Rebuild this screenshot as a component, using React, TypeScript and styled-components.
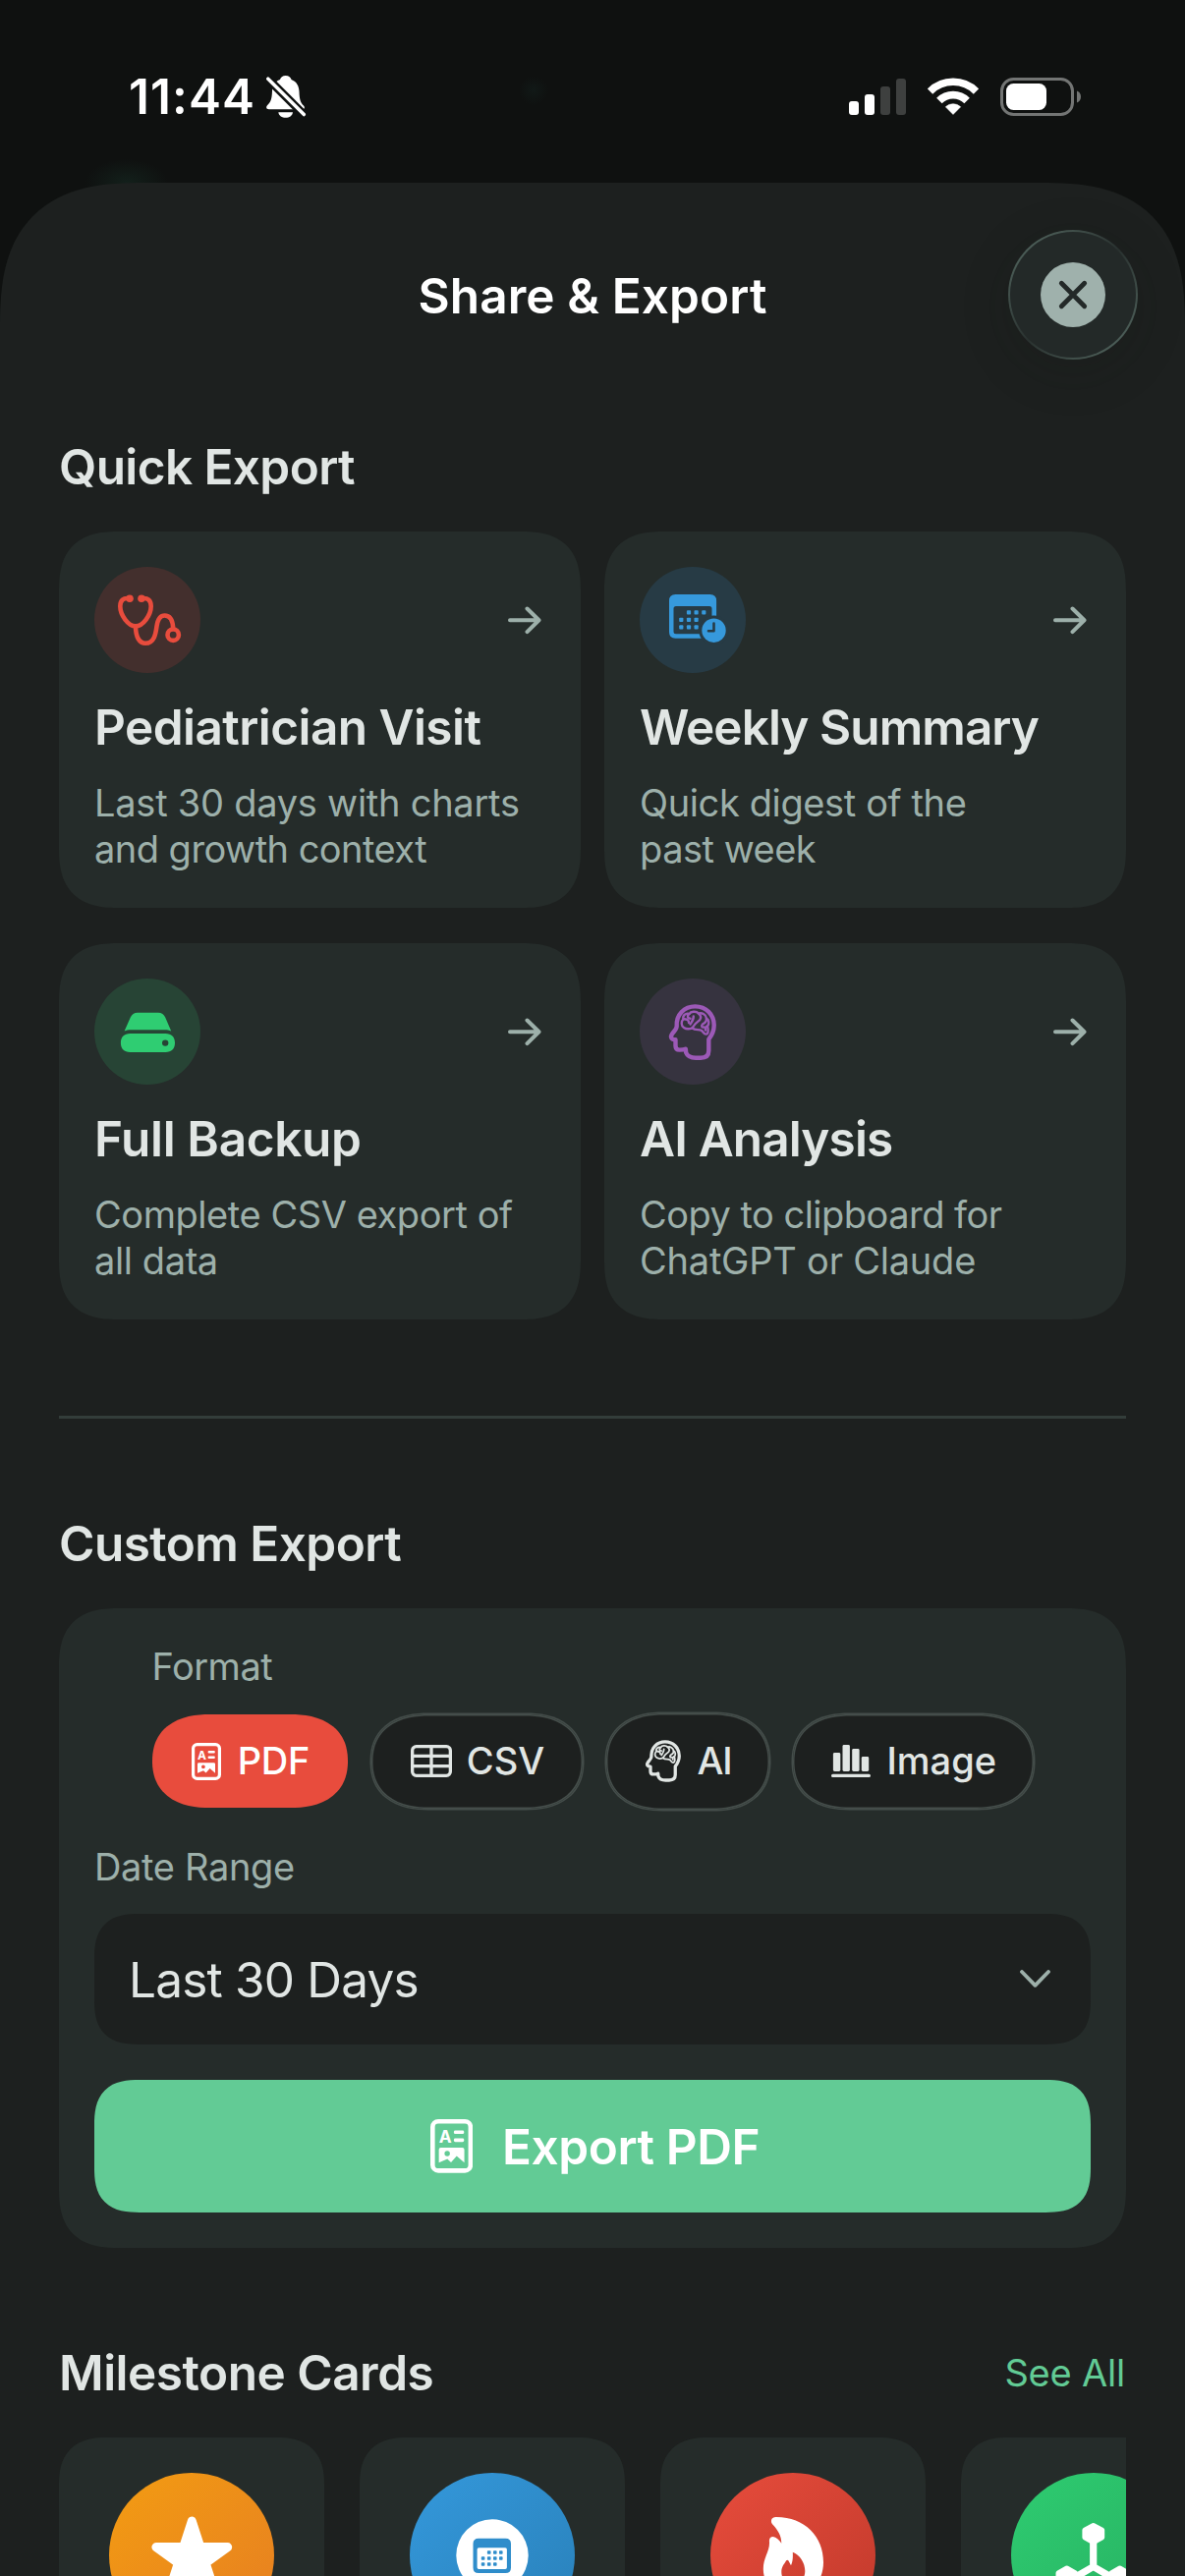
import React from "react";
import styled, { createGlobalStyle } from "styled-components";

const color = {
  backdrop: "#0f1110",
  sheet: "#1d201f",
  card: "#252c2a",
  text: "#e1e6e4",
  muted: "#9db0aa",
  line: "#333d3a",
  outline: "#444d4a",
  green: "#62cb95",
  red: "#e84c3d",
};

const GlobalStyle = createGlobalStyle`
  * { box-sizing: border-box; }
  body { margin: 0; background: ${color.backdrop}; }
  svg { display: block; flex: none; }
`;

const Screen = styled.div`
  width: 1206px;
  height: 2622px;
  overflow: hidden;
  display: flex;
  flex-direction: column;
  font-family: Inter, "Liberation Sans", sans-serif;
  color: ${color.text};
  background:
    radial-gradient(ellipse 42px 24px at 129px 186px, #13201b 0%, #12191600 100%),
    radial-gradient(circle 15px at 543px 92px, #111917 0%, #10151300 100%),
    ${color.backdrop};
`;

const StatusBar = styled.div`
  height: 186px;
  flex: none;
  padding: 68px 106px 58px 131px;
  display: flex;
  align-items: center;
  justify-content: space-between;
`;

const StatusGroup = styled.div<{ $gap: number }>`
  display: flex;
  align-items: center;
  gap: ${(p) => p.$gap}px;
`;

const Clock = styled.span`
  font-size: 49.5px;
  line-height: 60px;
  font-weight: 590;
  letter-spacing: 1.1px;
  color: #fff;
`;

const Sheet = styled.main`
  flex: 1;
  min-height: 0;
  overflow: hidden;
  background: ${color.sheet};
  border-radius: 146px 146px 0 0;
  corner-shape: superellipse(1.4);
  padding-top: 48px;
`;

const SheetHeader = styled.header`
  height: 132px;
  padding: 0 48px;
  display: grid;
  grid-template-columns: 1fr auto 1fr;
  align-items: center;
`;

const SheetTitle = styled.h1`
  grid-column: 2;
  margin: 0;
  padding-top: 2px;
  font-size: 49.5px;
  line-height: 60px;
  font-weight: 590;
  letter-spacing: 0.1px;
  color: #fff;
`;

const CloseButton = styled.button`
  justify-self: end;
  width: 132px;
  height: 132px;
  padding: 0;
  border: 2.5px solid transparent;
  border-radius: 50%;
  display: flex;
  align-items: center;
  justify-content: center;
  background:
    linear-gradient(#232928, #232928) padding-box,
    linear-gradient(135deg, #4d5f59 12%, #29312f 50%, #4d5f59 88%) border-box;
  box-shadow: 0 12px 50px rgba(20, 24, 22, 0.2);
`;

const Content = styled.div`
  padding: 79px 60px 0;
`;

const SectionHead = styled.div`
  display: flex;
  align-items: center;
  justify-content: space-between;
  margin-bottom: 36px;
`;

const SectionTitle = styled.h2<{ $track: number }>`
  margin: 0;
  font-size: 49.5px;
  line-height: 60px;
  font-weight: 590;
  letter-spacing: ${(p) => p.$track}px;
`;

const SeeAll = styled.a`
  padding-right: 1px;
  font-size: 38px;
  line-height: 47px;
  letter-spacing: -0.2px;
  color: ${color.green};
`;

const CardGrid = styled.div`
  display: grid;
  grid-template-columns: 1fr 1fr;
  gap: 36px 24px;
`;

const Card = styled.article`
  height: 383px;
  padding: 36px;
  background: ${color.card};
  border-radius: 62px;
  corner-shape: superellipse(1.4);
`;

const CardTop = styled.div`
  display: flex;
  align-items: center;
  justify-content: space-between;
  padding-right: 4px;
`;

const Badge = styled.div<{ $tint: string; $ink: string }>`
  width: 108px;
  height: 108px;
  border-radius: 50%;
  background: ${(p) => p.$tint};
  color: ${(p) => p.$ink};
`;

const CardTitle = styled.h3<{ $track: number }>`
  margin: 25px 0 24px;
  font-size: 49.5px;
  line-height: 60px;
  font-weight: 590;
  letter-spacing: ${(p) => p.$track}px;
  white-space: nowrap;
`;

const CardText = styled.p`
  margin: 0;
  font-size: 38px;
  line-height: 47px;
  color: ${color.muted};
`;

const CardLine = styled.span<{ $track: number }>`
  display: block;
  white-space: nowrap;
  letter-spacing: ${(p) => p.$track}px;
`;

const Divider = styled.hr`
  height: 3px;
  border: 0;
  margin: 98px 0 97px;
  background: ${color.line};
`;

const Panel = styled.section`
  padding: 36px;
  margin-bottom: 97px;
  background: ${color.card};
  border-radius: 62px;
  corner-shape: superellipse(1.4);
`;

const FormatGroup = styled.div`
  width: 897px;
  margin: 0 auto 35.5px;
`;

const FieldLabel = styled.div<{ $track: number; $after: number }>`
  font-size: 38px;
  line-height: 47px;
  letter-spacing: ${(p) => p.$track}px;
  color: ${color.muted};
  margin-bottom: ${(p) => p.$after}px;
`;

const PillRow = styled.div`
  height: 98px;
  display: flex;
  align-items: center;
  gap: 24px;
`;

const Pill = styled.button<{ $w: number; $h: number; $gap: number; $active?: boolean; $track: number }>`
  width: ${(p) => p.$w}px;
  height: ${(p) => p.$h}px;
  padding: 0 0 0 2px;
  border: 0;
  display: flex;
  align-items: center;
  justify-content: center;
  gap: ${(p) => p.$gap}px;
  border-radius: 58px / ${(p) => p.$h / 2}px;
  corner-shape: superellipse(1.2);
  font: 500 38px/47px Inter, "Liberation Sans", sans-serif;
  letter-spacing: ${(p) => p.$track}px;
  color: ${(p) => (p.$active ? "#fff" : color.text)};
  background: ${(p) => (p.$active ? color.red : color.sheet)};
  box-shadow: ${(p) =>
    p.$active ? "none" : `0 0 0 1.5px ${color.outline}, inset 0 0 0 1.5px ${color.outline}`};
`;

const Select = styled.div`
  height: 133px;
  padding: 0 41px 0 35px;
  margin-bottom: 36px;
  display: flex;
  align-items: center;
  justify-content: space-between;
  border-radius: 46px;
  corner-shape: superellipse(1.4);
  background: ${color.sheet};
  font-size: 49.5px;
  line-height: 60px;
  letter-spacing: -0.8px;
`;

const ExportButton = styled.button`
  width: 100%;
  height: 135px;
  padding: 0 0 0 5px;
  border: 0;
  display: flex;
  align-items: center;
  justify-content: center;
  gap: 30px;
  border-radius: 46px;
  corner-shape: superellipse(1.4);
  background: ${color.green};
  color: #fff;
  font: 590 49.5px/60px Inter, "Liberation Sans", sans-serif;
  letter-spacing: -0.42px;
`;

const MilestoneStrip = styled.div`
  display: flex;
  gap: 36px;
  overflow: hidden;
`;

const MilestoneCard = styled.div`
  flex: none;
  width: 270px;
  height: 330px;
  padding: 36px 51px;
  background: ${color.card};
  border-radius: 48px;
  corner-shape: superellipse(1.3);
`;

const Medal = styled.div<{ $from: string; $to: string }>`
  width: 168px;
  height: 168px;
  border-radius: 50%;
  background: linear-gradient(135deg, ${(p) => p.$from}, ${(p) => p.$to});
  color: #fff;
`;

/* ---------- icons ---------- */

const BellSlash = () => (
  <svg width="41" height="43" viewBox="0 0 41 43">
    <path
      fill="#fff"
      d="M19.7 0C23 0 25 2 25.5 4C31 6 33.4 11 33.5 16.3C33.8 25 35 27.5 38 30.6C39.6 32.4 39 34.2 36.5 34.2H2.8C0 34.2-.6 32 1 30.2C4.500 26.500 5.600 25 6 15.500C6.200 10 9 6 14 4C14.500 2 16.500 0 19.700 0Z"
    />
    <path fill="#fff" d="M12.300 37.300H27C26.500 41 23.500 42.800 19.700 42.800C16 42.800 12.800 41 12.300 37.300Z" />
    <path d="M1.600 3L38.500 40" stroke={color.backdrop} strokeWidth="8.500" />
    <path d="M1.800 3.200L38.300 39.600" stroke="#fff" strokeWidth="3.500" strokeLinecap="round" />
  </svg>
);

const Signal = () => (
  <svg width="58" height="37" viewBox="0 0 58 37">
    <g fill="#fff">
      <rect x="0" y="23" width="10" height="14" rx="3" />
      <rect x="16" y="16" width="10" height="21" rx="3" />
    </g>
    <g fill="#3e403f">
      <rect x="32" y="8" width="10" height="29" rx="3" />
      <rect x="48" y="0" width="10" height="37" rx="3" />
    </g>
  </svg>
);

const Wifi = () => (
  <svg width="52" height="38" viewBox="0 0 52 38">
    <g fill="none" stroke="#fff">
      <path d="M2.500 14A33.200 33.200 0 0 1 49.500 14" strokeWidth="7.600" />
      <path d="M11.900 23.400A20 20 0 0 1 40.100 23.400" strokeWidth="7.800" />
    </g>
    <path d="M26 37.500L18.300 29.800A11 11 0 0 1 33.700 29.800Z" fill="#fff" stroke="#fff" strokeWidth="0.500" />
  </svg>
);

const Battery = () => (
  <svg width="82" height="39" viewBox="0 0 82 39">
    <rect x="1.500" y="1.500" width="72" height="36" rx="12" fill="none" stroke="#737574" strokeWidth="3" />
    <rect x="6" y="6" width="41" height="27" rx="7.500" fill="#fff" />
    <path d="M78 13.500C80.600 14.500 82 16.800 82 19.500C82 22.200 80.600 24.500 78 25.500Z" fill="#737574" />
  </svg>
);

const CloseMark = () => (
  <svg width="66" height="66" viewBox="0 0 66 66">
    <circle cx="33" cy="33" r="33" fill="#9fb1ac" />
    <path d="M21.300 21.300L44.700 44.700M44.700 21.300L21.300 44.700" stroke="#232928" strokeWidth="4.800" strokeLinecap="round" />
  </svg>
);

const Arrow = () => (
  <svg width="34" height="30" viewBox="0 0 34 30" fill="none" stroke={color.muted} strokeWidth="4" strokeLinecap="round" strokeLinejoin="round">
    <path d="M2 15.300H31M19.500 3.500L31.500 15.300L19.500 27.100" />
  </svg>
);

const Chevron = () => (
  <svg width="31" height="19" viewBox="0 0 31 19" fill="none" stroke={color.muted} strokeWidth="3.800" strokeLinecap="round" strokeLinejoin="round">
    <path d="M2 2L15.500 15.800L29 2" />
  </svg>
);

const Stethoscope = () => (
  <svg width="108" height="108" viewBox="0 0 108 108" fill="none" stroke="currentColor" strokeWidth="4.600" strokeLinecap="round">
    <path d="M36 32.300C29.500 30.800 26.300 34.500 26.300 40C26.300 49 34.500 60.300 42 60.300C49.500 60.300 57.700 49 57.700 40C57.700 34.500 54.500 30.800 48 32.300" />
    <path d="M42 60.300C42 71.500 46 77.800 52 77.800C61 77.800 62.500 68 63.500 60.500C64.600 53 67 49.500 71.600 49.500C77 49.500 79.700 54 80.200 62" />
    <circle cx="80.200" cy="69.200" r="5.700" />
    <g fill="currentColor" stroke="none">
      <circle cx="36" cy="32.300" r="3.800" />
      <circle cx="48" cy="32.300" r="3.800" />
    </g>
  </svg>
);

const CalendarClock = ({ gap }: { gap: string }) => (
  <svg width="108" height="108" viewBox="0 0 108 108" fill="currentColor">
    <path
      fillRule="evenodd"
      d="M36.500 28H71.600Q78.100 28 78.100 34.500V66.200Q78.100 72.700 71.600 72.700H36.500Q30 72.700 30 66.200V34.500Q30 28 36.500 28ZM37 40Q34.500 40 34.500 42.500V65.700Q34.500 68.200 37 68.200H71Q73.500 68.200 73.500 65.700V42.500Q73.500 40 71 40Z"
    />
    {[
      [50, 46.3], [57.6, 46.3], [65.3, 46.3],
      [42.3, 53.8], [50, 53.8], [57.6, 53.8],
      [42.3, 61.4], [50, 61.4], [57.6, 61.4],
    ].map(([x, y]) => (
      <rect key={`${x}-${y}`} x={x - 2.1} y={y - 2.1} width="4.200" height="4.200" rx="0.900" />
    ))}
    <circle cx="75.500" cy="64.700" r="15.200" fill={gap} />
    <circle cx="75.500" cy="64.700" r="12.200" />
    <path d="M75.500 57.500V65.200H70" fill="none" stroke={gap} strokeWidth="2.600" strokeLinecap="round" strokeLinejoin="round" />
  </svg>
);

const Drive = () => (
  <svg width="108" height="108" viewBox="0 0 108 108" fill="currentColor">
    <path d="M30.600 53.600L36.800 39.600C38.300 36.200 40.500 34.700 44 34.700H65C68.500 34.700 70.800 36.200 72.200 39.600L78.200 53.600C76 52.500 74 52.200 72 52.200H37C34.500 52.200 32.500 52.500 30.600 53.600Z" />
    <path
      fillRule="evenodd"
      d="M36.400 56H72.500C78.500 56 82 59.500 82 65.500C82 71.500 78.500 75 72.500 75H36.400C30.400 75 26.900 71.500 26.900 65.500C26.900 59.500 30.400 56 36.400 56ZM72.200 62.400A3.200 3.200 0 1 0 72.200 68.800A3.200 3.200 0 1 0 72.200 62.400Z"
    />
  </svg>
);

const HeadShape = () => (
  <g fill="none" stroke="currentColor" strokeLinejoin="round" strokeLinecap="round">
    <path
      strokeWidth="4.400"
      d="M56.500 28.400C67.500 28.400 75.700 36.500 75.700 47.500C75.700 54.500 73.300 58 70.300 61.800V73.500C70.300 78.800 67 80.700 62 80.700H57C51.500 80.700 48.500 78.800 47.200 75.500L46.800 71.600C45 72.600 42 72.600 40.500 72.600C37.800 72.600 36.500 71 36.500 68.500V62.200C32 62.200 31 59.500 33 56.500C35 53.500 37.700 51.500 37.700 48.500C37 36.500 45.500 28.400 56.500 28.400Z"
    />
    <g strokeWidth="2.400">
      <path d="M50.500 36C46.500 34.800 43.500 38 44.500 41.300C42 43.500 42 48 45 50C48 52 51.500 51.200 53.500 50.300C56.500 53.200 60.500 51.300 63 53C65 54.500 65.300 57 67.800 56.600C70.300 56 69.800 51.500 69 48.500C71 46 70.800 42 68 40.600C67.500 36.500 63 34.300 60 35.600C57.500 32.900 52 33.400 50.500 36Z" />
      <path d="M50.500 36C48 37.500 48.500 40.500 51.500 40.800M44.500 41.300C47 40.800 50.500 42.500 50 45" />
      <path d="M54.800 38.500C55 42 52.500 45 51.500 46.500M60 35.600C63.500 38.500 62.500 42 59 44C56.500 45.500 55 48 53.500 50.300" />
      <path d="M68 40.600C68.500 44.500 66 45 64 46.500C62.500 48 63 50 65.500 49.500M69 48.500C67.500 48.500 66.500 50.500 67 52.500" />
    </g>
  </g>
);

const Head = () => (
  <svg width="108" height="108" viewBox="0 0 108 108">
    <HeadShape />
  </svg>
);

const HeadSmall = () => (
  <svg width="36" height="43" viewBox="29.800 26 48.200 57.200">
    <HeadShape />
  </svg>
);

const IconLetter = styled.text`
  font: 700 12px Inter, "Liberation Sans", sans-serif;
  letter-spacing: 0;
`;

const DocIcon = ({ scale = 1 }: { scale?: number }) => (
  <svg width={30 * scale} height={38 * scale} viewBox="0 0 30 38" fill="currentColor">
    <rect x="1.600" y="1.600" width="26.800" height="34.800" rx="4" fill="none" stroke="currentColor" strokeWidth="3.200" />
    <IconLetter x="6" y="16.500">A</IconLetter>
    <rect x="16.600" y="8" width="7.200" height="2.500" rx="1" />
    <rect x="16.600" y="13.600" width="7.200" height="2.500" rx="1" />
    <path
      fillRule="evenodd"
      d="M7.400 20.200H22.600Q24 20.200 24 21.600V30.800L18.600 26L14.600 30.600L12 28.200L6 30.800V21.600Q6 20.200 7.400 20.200ZM11.900 22.400A1.900 1.900 0 1 0 11.900 26.200A1.900 1.900 0 1 0 11.900 22.400Z"
    />
  </svg>
);

const TableIcon = () => (
  <svg width="42" height="33" viewBox="0 0 42 33" fill="none" stroke="currentColor" strokeWidth="3.300">
    <rect x="1.650" y="1.650" width="38.700" height="29.700" rx="4" />
    <path d="M21 2V31M2 11.400H40M2 21.600H40" />
  </svg>
);

const BarsIcon = () => (
  <svg width="40" height="33" viewBox="0 0 40 33" fill="currentColor">
    <rect x="1.900" y="8" width="7.400" height="19" rx="1.400" />
    <rect x="11.500" y="0" width="7.400" height="27" rx="1.400" />
    <rect x="21.200" y="4" width="7.400" height="23" rx="1.400" />
    <rect x="30.800" y="12" width="7.400" height="15" rx="1.400" />
    <rect x="0" y="29.800" width="40" height="3.200" rx="1.600" />
  </svg>
);

const Star = () => (
  <svg width="168" height="168" viewBox="0 0 168 168">
    <polygon
      points="84.300,49.100 92.900,75.550 120.700,75.600 98.200,91.900 106.800,118.400 84.300,102 61.800,118.400 70.400,91.900 47.900,75.600 75.700,75.550"
      fill="#fff"
      stroke="#fff"
      strokeWidth="9"
      strokeLinejoin="round"
    />
  </svg>
);

const CalendarDisc = () => (
  <svg width="168" height="168" viewBox="0 0 168 168">
    <circle cx="84" cy="84" r="36.700" fill="#fff" />
    <g fill="#2f8dcb">
      <path
        fillRule="evenodd"
        d="M70 66.700H97.500Q103 66.700 103 72.200V96.500Q103 102 97.500 102H70Q64.500 102 64.500 96.500V72.200Q64.500 66.700 70 66.700ZM70.300 76.200Q68.600 76.200 68.600 77.900V96.300Q68.600 98 70.300 98H97.200Q98.900 98 98.900 96.300V77.900Q98.900 76.200 97.200 76.200Z"
      />
      {[
        [80.7, 81], [86.8, 81], [92.8, 81],
        [74.6, 87], [80.7, 87], [86.8, 87], [92.8, 87],
        [74.6, 93], [80.7, 93], [86.8, 93],
      ].map(([x, y]) => (
        <rect key={`${x}-${y}`} x={x - 1.8} y={y - 1.8} width="3.600" height="3.600" rx="0.800" />
      ))}
    </g>
  </svg>
);

const Flame = () => (
  <svg width="168" height="168" viewBox="0 0 168 168" fill="#fff">
    <path
      fillRule="evenodd"
      d="M62 50C61.500 46.500 64 45 67.300 45C96 45 115 65 115 91C115 110 103 124 84 124C66 124 53.800 114 53.800 98C53.800 86 60.500 80 60 70.500C59.500 67 61 65 63.800 65C67 65.500 70 68 72.300 71.800C72.300 64 68.500 58.500 64.500 53.800C63 52.300 62.200 51.300 62 50ZM83.800 80.700C91 83.500 96.300 91.500 96.300 100C96.300 108 91 113 84.500 113C77 113 72.300 108 72.300 101C72.300 95 75.300 93 77 89.500C77.800 88.300 79 88.600 79.500 89.500L82 94.200C84 90 84 86 83.800 80.700Z"
    />
  </svg>
);

const Molecule = () => (
  <svg width="168" height="168" viewBox="0 0 168 168" fill="#fff" stroke="#fff" strokeLinejoin="round">
    <path d="M83.700 62V95.500M83.700 95.500L57 111M83.700 95.500L110.400 111" strokeWidth="7.200" fill="none" />
    <g strokeWidth="5">
      <path d="M83.700 53.500L92.700 58.200V65.800L83.700 70.800L74.900 65.800V58.200Z" />
      <path d="M56.700 97L65.500 102V110L56.700 115L48 110V102Z" />
      <path d="M110.700 97L119.500 102V110L110.700 115L102 110V102Z" />
    </g>
  </svg>
);

/* ---------- data ---------- */

const quickExports = [
  {
    title: "Pediatrician Visit", track: -0.55, tint: "#432f2d", ink: "#e84c3d", icon: <Stethoscope />,
    lines: [["Last 30 days with charts", -0.25], ["and growth context", -0.53]],
  },
  {
    title: "Weekly Summary", track: -0.95, tint: "#273b45", ink: "#3699dc", icon: <CalendarClock gap="#273b45" />,
    lines: [["Quick digest of the", -0.38], ["past week", -0.5]],
  },
  {
    title: "Full Backup", track: -0.35, tint: "#274435", ink: "#2fcd72", icon: <Drive />,
    lines: [["Complete CSV export of", -0.44], ["all data", -0.4]],
  },
  {
    title: "AI Analysis", track: -0.85, tint: "#36333f", ink: "#9c59b7", icon: <Head />,
    lines: [["Copy to clipboard for", -0.52], ["ChatGPT or Claude", -0.22]],
  },
] as const;

const formats = [
  { label: "PDF", width: 199, height: 95, gap: 17, track: -0.2, icon: <DocIcon />, active: true },
  { label: "CSV", width: 215, height: 96, gap: 15, track: 0, icon: <TableIcon /> },
  { label: "AI", width: 166, height: 98, gap: 17, track: -1.2, icon: <HeadSmall /> },
  { label: "Image", width: 245, height: 96, gap: 16.5, track: 0, icon: <BarsIcon /> },
];

const milestones = [
  { id: "star", from: "#f39c12", to: "#e67e22", icon: <Star /> },
  { id: "calendar", from: "#3498db", to: "#2980b9", icon: <CalendarDisc /> },
  { id: "flame", from: "#e74c3c", to: "#c0392b", icon: <Flame /> },
  { id: "molecule", from: "#2ecc71", to: "#27ae60", icon: <Molecule /> },
];

export default function App() {
  return (
    <Screen>
      <GlobalStyle />
      <StatusBar>
        <StatusGroup $gap={11}>
          <Clock>11:44</Clock>
          <BellSlash />
        </StatusGroup>
        <StatusGroup $gap={22}>
          <Signal />
          <Wifi />
          <Battery />
        </StatusGroup>
      </StatusBar>

      <Sheet>
        <SheetHeader>
          <SheetTitle>Share &amp; Export</SheetTitle>
          <CloseButton aria-label="Close">
            <CloseMark />
          </CloseButton>
        </SheetHeader>

        <Content>
          <SectionHead>
            <SectionTitle $track={-0.6}>Quick Export</SectionTitle>
          </SectionHead>
          <CardGrid>
            {quickExports.map((q) => (
              <Card key={q.title}>
                <CardTop>
                  <Badge $tint={q.tint} $ink={q.ink}>{q.icon}</Badge>
                  <Arrow />
                </CardTop>
                <CardTitle $track={q.track}>{q.title}</CardTitle>
                <CardText>
                  {q.lines.map(([text, track]) => (
                    <CardLine key={text} $track={track}>{text}</CardLine>
                  ))}
                </CardText>
              </Card>
            ))}
          </CardGrid>

          <Divider />

          <SectionHead>
            <SectionTitle $track={-0.55}>Custom Export</SectionTitle>
          </SectionHead>
          <Panel>
            <FormatGroup>
              <FieldLabel $track={-0.5} $after={23.5}>Format</FieldLabel>
              <PillRow>
                {formats.map((f) => (
                  <Pill
                    key={f.label}
                    $w={f.width}
                    $h={f.height}
                    $gap={f.gap}
                    $track={f.track}
                    $active={f.active}
                  >
                    {f.icon}
                    {f.label}
                  </Pill>
                ))}
              </PillRow>
            </FormatGroup>
            <FieldLabel $track={-0.34} $after={24}>Date Range</FieldLabel>
            <Select>
              Last 30 Days
              <Chevron />
            </Select>
            <ExportButton>
              <DocIcon scale={1.44} />
              Export PDF
            </ExportButton>
          </Panel>

          <SectionHead>
            <SectionTitle $track={-0.5}>Milestone Cards</SectionTitle>
            <SeeAll>See All</SeeAll>
          </SectionHead>
          <MilestoneStrip>
            {milestones.map((m) => (
              <MilestoneCard key={m.id}>
                <Medal $from={m.from} $to={m.to}>{m.icon}</Medal>
              </MilestoneCard>
            ))}
          </MilestoneStrip>
        </Content>
      </Sheet>
    </Screen>
  );
}
